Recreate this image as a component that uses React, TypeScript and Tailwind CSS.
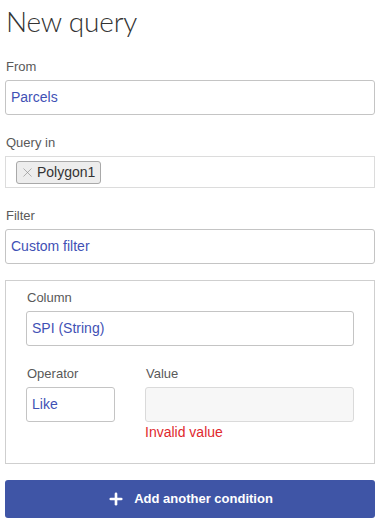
import { Plus, X } from "lucide-react";

const font = { fontFamily: '"Liberation Sans", Arial, sans-serif' };

function Label({ children }: { children: React.ReactNode }) {
  return <div className="text-[13px] leading-[15px] text-[#595959] pl-px">{children}</div>;
}

function Field({ value, className = "" }: { value?: string; className?: string }) {
  return (
    <div
      className={`h-[35px] flex items-center px-[5px] border border-[#c4c4c4] rounded-[3px] text-[14px] text-[#3f51b5] ${className}`}
    >
      {value}
    </div>
  );
}

export default function App() {
  return (
    <div className="w-[389px] h-[529px] bg-white overflow-hidden" style={font}>
      <div className="w-[370px] ml-[5px]">
        <h1
          className="text-[28px] leading-[40px] font-light tracking-[-0.2px] text-[#333] pl-px pt-px"
          style={{ fontFamily: 'Lato, sans-serif' }}
        >
          New query
        </h1>

        <div className="mt-[18px]">
          <Label>From</Label>
        </div>
        <Field value="Parcels" className="mt-[6px]" />

        <div className="mt-[20px]">
          <Label>Query in</Label>
        </div>
        <div className="mt-[6px] h-[32px] border border-[#dcdcdc] flex items-center pl-[10px]">
          <span className="h-[23px] flex items-center gap-[2px] pl-[3px] pr-[5px] bg-[#ededed] border border-[#a9a9a9] rounded-[3px] text-[14px] text-[#333]">
            <X size={15} strokeWidth={1} className="text-[#888]" />
            Polygon1
          </span>
        </div>

        <div className="mt-[20px]">
          <Label>Filter</Label>
        </div>
        <Field value="Custom filter" className="mt-[6px]" />

        <div className="mt-[16px] h-[184px] border border-[#cfcfcf] pt-[9px] px-[20px]">
          <Label>Column</Label>
          <Field value="SPI (String)" className="mt-[6px]" />

          <div className="mt-[20px] flex gap-[30px]">
            <div className="w-[89px]">
              <Label>Operator</Label>
              <Field value="Like" className="mt-[6px]" />
            </div>
            <div className="flex-1">
              <Label>Value</Label>
              <Field className="mt-[6px] bg-[#f7f7f7] border-[#dadada]" />
              <div className="mt-[2px] text-[14px] leading-[16px] text-[#e0282e]">Invalid value</div>
            </div>
          </div>
        </div>

        <button className="mt-[16px] w-full h-[38px] rounded-[3px] bg-[#3f55a6] flex items-center justify-center gap-[9px] text-white text-[13px] font-bold">
          <Plus size={18} strokeWidth={3.5} />
          Add another condition
        </button>
      </div>
    </div>
  );
}
